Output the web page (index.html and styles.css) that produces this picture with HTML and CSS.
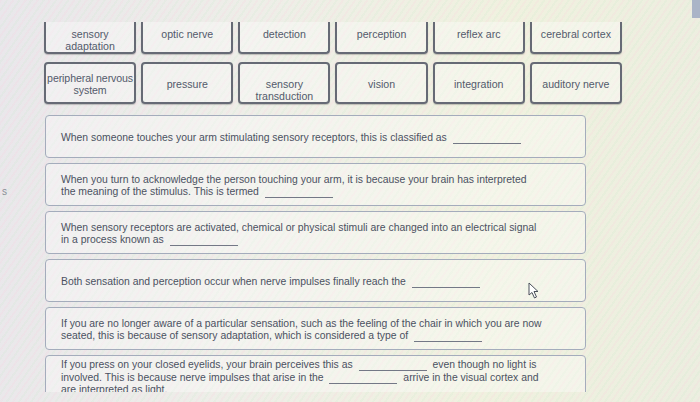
FILE: index.html
```html
<!DOCTYPE html>
<html lang="en">
<head>
    <title>Sensation and Perception</title>
    <link rel="stylesheet" href="styles.css">
</head>
<body>
    <div class="page">
        <!-- left panel, mostly scrolled out of view -->
        <div class="gutter"><span>s</span></div>

        <section class="main">
            <!-- word bank -->
            <div class="bank">
                <div class="tile cut">sensory<br>adaptation</div>
                <div class="tile cut">optic nerve</div>
                <div class="tile cut">detection</div>
                <div class="tile cut">perception</div>
                <div class="tile cut">reflex arc</div>
                <div class="tile cut">cerebral cortex</div>

                <div class="tile full tight">peripheral nervous<br>system</div>
                <div class="tile full">pressure</div>
                <div class="tile full">sensory<br>transduction</div>
                <div class="tile full">vision</div>
                <div class="tile full">integration</div>
                <div class="tile full">auditory nerve</div>
            </div>

            <!-- sentences to complete -->
            <div class="questions">
                <div class="prompt">
                    <p>When someone touches your arm stimulating sensory receptors, this is classified as <span class="blank"></span></p>
                </div>
                <div class="prompt">
                    <p>When you turn to acknowledge the person touching your arm, it is because your brain has interpreted<br>the meaning of the stimulus. This is termed <span class="blank"></span></p>
                </div>
                <div class="prompt">
                    <p>When sensory receptors are activated, chemical or physical stimuli are changed into an electrical signal<br>in a process known as <span class="blank"></span></p>
                </div>
                <div class="prompt">
                    <p>Both sensation and perception occur when nerve impulses finally reach the <span class="blank"></span></p>
                    <svg class="cursor" width="11" height="17" viewBox="0 0 11 17">
                        <path d="M1 1 L1 13 L4 10.5 L6.5 16 L8.5 15 L6 9.5 L10 9.5 Z" fill="#fff" stroke="#4a4f5a" stroke-width="1" stroke-linejoin="round"/>
                    </svg>
                </div>
                <div class="prompt">
                    <p>If you are no longer aware of a particular sensation, such as the feeling of the chair in which you are now<br>seated, this is because of sensory adaptation, which is considered a type of <span class="blank"></span></p>
                </div>
                <div class="prompt">
                    <p>If you press on your closed eyelids, your brain perceives this as <span class="blank"></span> even though no light is<br>involved. This is because nerve impulses that arise in the <span class="blank"></span> arrive in the visual cortex and<br>are interpreted as light.</p>
                </div>
            </div>
        </section>

        <div class="side">
            <div class="corner-btn"></div>
        </div>
    </div>
</body>
</html>
```

FILE: styles.css
```css
html, body {
    margin: 0;
    height: 100%;
}
body {
    font-family: "Liberation Sans", Arial, sans-serif;
    color: #4b5161;
    overflow: hidden;
    background:
        repeating-linear-gradient(125deg, rgba(255,190,215,0.12) 0 2px, rgba(255,255,255,0) 2px 5px, rgba(185,230,190,0.12) 5px 7px, rgba(255,255,255,0) 7px 10px),
        linear-gradient(95deg, #e9e7eb 0%, #eeeee8 35%, #f0f1df 70%, #eceee0 100%);
}
.page {
    display: grid;
    grid-template-columns: 44px 578px 1fr;
    height: 402px;
}
.gutter {
    padding: 186px 0 0 2px;
    font-size: 10px;
    color: #8b8e96;
}

/* word bank */
.bank {
    display: grid;
    grid-template-columns: repeat(6, 1fr);
    column-gap: 5px;
    row-gap: 8px;
    padding-top: 22px;
}
.tile {
    box-sizing: border-box;
    border: 2px solid #666a75;
    border-radius: 4px;
    background: rgba(255,255,255,0.35);
    box-shadow: 0 1px 1px rgba(0,0,0,0.2);
    text-align: center;
    font-size: 10.6px;
    line-height: 12px;
    color: #535a6b;
}
.tile.cut {
    height: 32px;
    border-top: 0;
    border-radius: 0 0 4px 4px;
    padding-top: 6px;
}
.tile.full {
    height: 42px;
    padding-top: 14px;
}
.tile.tight {
    padding-top: 8px;
    letter-spacing: -0.1px;
    white-space: nowrap;
}

/* sentences */
.questions {
    margin: 11px 0 0 1px;
    width: 541px;
    height: 277px;
    overflow: hidden;
    display: flex;
    flex-direction: column;
    gap: 5px;
}
.prompt {
    position: relative;
    box-sizing: border-box;
    flex: none;
    height: 43px;
    border: 1.5px solid #a4acbc;
    border-radius: 4px;
    background: rgba(255,255,255,0.35);
    display: flex;
    align-items: center;
    padding: 3px 15px 0;
    font-size: 10.4px;
    line-height: 12.5px;
}
.prompt p {
    margin: 0;
}
.blank {
    display: inline-block;
    width: 68px;
    border-bottom: 1px solid #737886;
    vertical-align: -3px;
    margin: 0 3px;
}
.cursor {
    position: absolute;
    left: 482px;
    top: 22px;
}

.side {
    display: flex;
    justify-content: flex-end;
}
.corner-btn {
    width: 8px;
    height: 18px;
    background: #aab4c7;
}
```
